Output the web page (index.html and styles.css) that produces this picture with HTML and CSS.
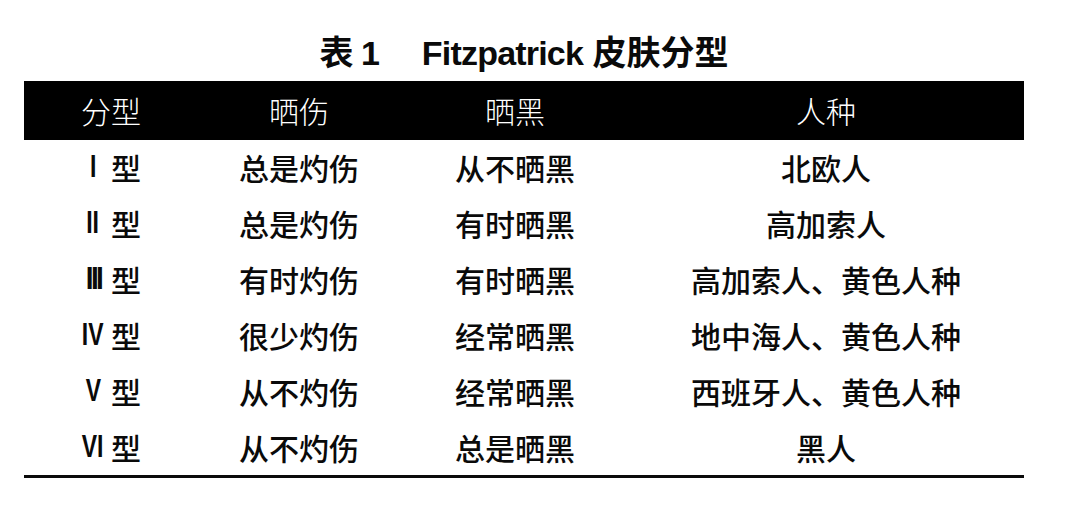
FILE: index.html
```html
<!DOCTYPE html>
<html lang="zh-CN">
<head>
<meta charset="utf-8">
<title>表1 Fitzpatrick 皮肤分型</title>
<link rel="stylesheet" href="styles.css">
</head>
<body>
<div class="wrap">
  <h1 class="title"><span class="tnum">表 1</span><span class="latin">Fitzpatrick</span> 皮肤分型</h1>
  <div class="table">
    <div class="row head">
      <div class="c1 hd">分型</div>
      <div class="c">晒伤</div>
      <div class="c">晒黑</div>
      <div class="c">人种</div>
    </div>
    <div class="body">
      <div class="row">
        <div class="c1"><span class="rn"><span class="rg">I</span></span>型</div>
        <div class="c">总是灼伤</div>
        <div class="c">从不晒黑</div>
        <div class="c">北欧人</div>
      </div>
      <div class="row">
        <div class="c1"><span class="rn"><span class="rg">II</span></span>型</div>
        <div class="c">总是灼伤</div>
        <div class="c">有时晒黑</div>
        <div class="c">高加索人</div>
      </div>
      <div class="row">
        <div class="c1"><span class="rn"><span class="rg tight">III</span></span>型</div>
        <div class="c">有时灼伤</div>
        <div class="c">有时晒黑</div>
        <div class="c">高加索人、黄色人种</div>
      </div>
      <div class="row">
        <div class="c1"><span class="rn"><span class="rg">IV</span></span>型</div>
        <div class="c">很少灼伤</div>
        <div class="c">经常晒黑</div>
        <div class="c">地中海人、黄色人种</div>
      </div>
      <div class="row">
        <div class="c1"><span class="rn"><span class="rg">V</span></span>型</div>
        <div class="c">从不灼伤</div>
        <div class="c">经常晒黑</div>
        <div class="c">西班牙人、黄色人种</div>
      </div>
      <div class="row">
        <div class="c1"><span class="rn"><span class="rg">VI</span></span>型</div>
        <div class="c">从不灼伤</div>
        <div class="c">总是晒黑</div>
        <div class="c">黑人</div>
      </div>
    </div>
  </div>
</div>
</body>
</html>
```

FILE: styles.css
```css
html, body {
  margin: 0;
  padding: 0;
  background: #ffffff;
}

body {
  font-family: "Noto Sans CJK SC", "Liberation Sans", sans-serif;
  color: #0a0a0a;
}

.wrap {
  width: 1000px;
  margin-left: 24px;
}

.title {
  margin: 33px 0 8px 0;
  height: 40px;
  line-height: 40px;
  text-align: center;
  font-family: "Liberation Sans", "Noto Sans CJK SC", sans-serif;
  font-size: 34px;
  font-weight: 700;
}

.tnum {
  margin-right: 42px;
  word-spacing: -2px;
}

.latin {
  letter-spacing: -0.8px;
}

.table {
  border-bottom: 3px solid #0a0a0a;
  margin-top: 0;
}

.row {
  display: grid;
  grid-template-columns: 172px 206px 226px 396px;
  height: 56px;
  align-items: center;
  font-size: 30px;
  font-weight: 500;
  line-height: 56px;
}

.row.head {
  height: 59px;
  line-height: 59px;
  background: #000000;
  color: #ffffff;
  font-weight: 300;
}

.body {
  margin-top: -1px;
}

.c1 {
  display: flex;
  justify-content: flex-end;
  align-items: center;
  padding-right: 55px;
}

.c {
  text-align: center;
}

.rn {
  display: inline-flex;
  justify-content: center;
  width: 26px;
  margin-right: 5px;
}

.rg {
  display: inline-block;
  font-family: "Liberation Sans", sans-serif;
  font-size: 31px;
  font-weight: 700;
  transform: scaleX(0.74);
  white-space: nowrap;
}

.rg.tight {
  letter-spacing: -3px;
  transform: scaleX(0.9);
}
```
